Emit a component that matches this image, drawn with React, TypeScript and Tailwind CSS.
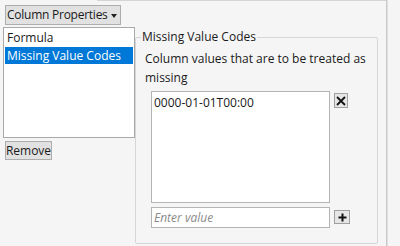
export default function App() {
  return (
    <div
      className="w-[400px] h-[246px] bg-[#f5f5f5] overflow-hidden flex text-[12px] text-[#1a1a1a]"
      style={{ fontFamily: '"Open Sans", "Noto Sans", sans-serif' }}
    >
      <div className="w-[386px] flex flex-col">
        <div className="ml-[97px] h-px bg-[#d4d4d4]" />
        <div className="flex pl-[3px]">
          {/* left column */}
          <div className="w-[132px] flex flex-col">
            <button className="mt-[4px] ml-[2px] w-[116px] h-[20px] flex items-center pl-[1px] pr-[3px] bg-[#e1e1e1] border border-[#adadad] leading-none whitespace-nowrap tracking-[-0.25px]">
              <span>Column Properties</span>
              <svg width="6" height="4" viewBox="0 0 6 4" className="ml-auto mt-[1px]">
                <path d="M0 0h6L3 4z" fill="#222" />
              </svg>
            </button>
            <div className="mt-[2px] h-[111px] bg-white border border-[#a9a9a9] flex flex-col">
              <div className="h-[19px] pl-[3px] flex items-center">Formula</div>
              <div className="h-[17px] mx-px pl-[2px] flex items-center bg-[#0078d7] text-white">
                Missing Value Codes
              </div>
            </div>
            <button className="mt-[3px] ml-[2px] w-[47px] h-[19px] flex items-center justify-center bg-[#e1e1e1] border border-[#adadad] leading-none">
              Remove
            </button>
          </div>

          {/* group box */}
          <div className="mt-[36px] w-[243px] h-[207px] border border-[#d6d6d6] rounded-[2px] relative flex flex-col pl-[9px]">
            <div className="absolute -top-[9px] left-[5px] px-px bg-[#f5f5f5] leading-[16px]">
              Missing Value Codes
            </div>
            <div className="mt-[11px] leading-[19px]">
              Column values that are to be treated as
              <br />
              missing
            </div>
            <div className="mt-[4px] ml-[6px] flex">
              <div className="w-[179px] h-[112px] bg-white border border-[#b4b4b4] pl-[2px] pt-[2px] leading-[18px]">
                0000-01-01T00:00
              </div>
              <button className="ml-[4px] mt-[2px] w-[14px] h-[15px] bg-[#e6e6e6] border border-[#a0a0a0] flex items-center justify-center">
                <svg width="10" height="10" viewBox="0 0 10 10">
                  <path d="M1 1L9 9M9 1L1 9" stroke="#111" strokeWidth="1.8" />
                </svg>
              </button>
            </div>
            <div className="mt-[4px] ml-[6px] flex items-start">
              <div className="w-[179px] h-[21px] bg-white border border-[#b4b4b4] pl-[2px] flex items-center italic text-[#8a8a8a]">
                Enter value
              </div>
              <button className="ml-[4px] mt-[3px] w-[16px] h-[14px] bg-[#e6e6e6] border border-[#a0a0a0] flex items-center justify-center">
                <svg width="9" height="9" viewBox="0 0 9 9">
                  <path d="M4.5 0.5V8.5M0.5 4.5H8.5" stroke="#111" strokeWidth="2" />
                </svg>
              </button>
            </div>
          </div>
        </div>
      </div>
      <div className="w-px h-full bg-[#c9c9c9]" />
      <div className="w-px h-full bg-[#e0e0e0]" />
      <div className="flex-1 bg-[#f5f5f5]" />
    </div>
  );
}
